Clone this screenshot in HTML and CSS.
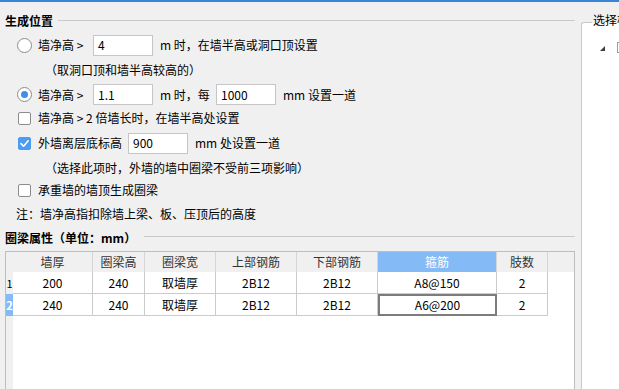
FILE: index.html
```html
<!DOCTYPE html>
<html lang="zh-CN">
<head>
<meta charset="utf-8">
<title>圈梁设置</title>
<link rel="stylesheet" href="styles.css">
</head>
<body>
<div class="topbar"></div>
<div class="page">
  <div class="main">
    <div class="section-title t1"><span>生成位置</span><i class="rule"></i></div>
    <div class="options">
      <div class="row r1">
        <span class="radio"></span>
        <span class="lbl">墙净高 &gt;</span>
        <span class="field">4</span>
        <span class="after">m 时，在墙半高或洞口顶设置</span>
      </div>
      <div class="row r2 note">（取洞口顶和墙半高较高的）</div>
      <div class="row r3">
        <span class="radio on"></span>
        <span class="lbl">墙净高 &gt;</span>
        <span class="field">1.1</span>
        <span class="after each">m 时，每</span>
        <span class="field">1000</span>
        <span class="after">mm 设置一道</span>
      </div>
      <div class="row r4">
        <span class="check"></span>
        <span>墙净高 &gt; 2 倍墙长时，在墙半高处设置</span>
      </div>
      <div class="row r5">
        <span class="check on"><svg viewBox="0 0 13 13" width="13" height="13"><path d="M3 6.6 L5.6 9.2 L10.2 3.8" fill="none" stroke="#fff" stroke-width="1.6" stroke-linecap="round" stroke-linejoin="round"/></svg></span>
        <span class="lbl wide">外墙离层底标高</span>
        <span class="field">900</span>
        <span class="after">mm 处设置一道</span>
      </div>
      <div class="row r6 note">（选择此项时，外墙的墙中圈梁不受前三项影响）</div>
      <div class="row r7">
        <span class="check"></span>
        <span>承重墙的墙顶生成圈梁</span>
      </div>
      <div class="row r8 remark">注：墙净高指扣除墙上梁、板、压顶后的高度</div>
    </div>
    <div class="section-title t2"><span>圈梁属性（单位：mm）</span><i class="rule"></i></div>
    <div class="grid">
      <div class="rh hd"></div>
      <div class="hc">墙厚</div>
      <div class="hc">圈梁高</div>
      <div class="hc">圈梁宽</div>
      <div class="hc">上部钢筋</div>
      <div class="hc">下部钢筋</div>
      <div class="hc sel">箍筋</div>
      <div class="hc">肢数</div>
      <div class="hfill"></div>

      <div class="rh">1</div>
      <div class="c">200</div>
      <div class="c">240</div>
      <div class="c">取墙厚</div>
      <div class="c">2B12</div>
      <div class="c">2B12</div>
      <div class="c">A8@150</div>
      <div class="c">2</div>
      <div class="fill"></div>

      <div class="rh cur">2</div>
      <div class="c">240</div>
      <div class="c">240</div>
      <div class="c">取墙厚</div>
      <div class="c">2B12</div>
      <div class="c">2B12</div>
      <div class="c focus">A6@200</div>
      <div class="c">2</div>
      <div class="fill"></div>

      <div class="rh"></div>
      <div class="empty"></div>
    </div>
  </div>
  <div class="panel">
    <span class="legend">选择构件</span>
    <div class="tree">
      <span class="tri"></span>
      <span class="tbox"></span>
    </div>
  </div>
</div>
</body>
</html>
```
FILE: styles.css
```css
* { box-sizing: border-box; }
html, body { margin: 0; padding: 0; }
body {
  width: 619px;
  height: 389px;
  overflow: hidden;
  background: #f0f0f0;
  font-family: "Noto Sans CJK SC", "Noto Sans", sans-serif;
  font-size: 12px;
  color: #000;
}
.topbar { height: 2px; background: #3a84d6; }
.page { display: flex; height: 387px; }
.main { width: 575px; flex: none; padding-left: 5px; }

.section-title {
  display: flex;
  align-items: center;
  height: 21px;
  font-weight: bold;
  line-height: 16px;
  white-space: nowrap;
}
.t1 { margin-top: 8px; }
.rule { flex: 1; height: 1px; background: #c9c9c9; margin-left: 5px; }
.t2 .rule { margin-left: 8px; margin-top: -2px; }
.t1 .rule { margin-top: -1px; }

.options { margin-top: 1px; }
.row {
  display: flex;
  align-items: center;
  padding-left: 12px;
  line-height: 16px;
  white-space: nowrap;
}
.r1 { height: 26px; }
.r2 { height: 24px; }
.r3 { height: 25px; }
.r4 { height: 22px; }
.r5 { height: 28px; }
.r6 { height: 22px; }
.r7 { height: 22px; }
.r8 { height: 26px; }
.note { padding-left: 40px; }
.remark { padding-left: 11px; }

.radio {
  width: 15px; height: 15px;
  border-radius: 50%;
  border: 1px solid #8c8c8c;
  background: #fff;
  margin-right: 6px;
  display: flex; align-items: center; justify-content: center;
}
.radio.on::after {
  content: "";
  width: 7px; height: 7px;
  border-radius: 50%;
  background: #3f8fe9;
}
.check {
  width: 13px; height: 13px;
  border: 1px solid #8c8c8c;
  border-radius: 2px;
  background: #fff;
  margin-left: 1px;
  margin-right: 7px;
  display: flex;
}
.check.on { background: #4c9cf0; border-color: #4c9cf0; }
.check.on svg { margin: -1px; }

.lbl { width: 55px; }
.lbl.wide { width: 90px; }
.field {
  width: 60px; height: 21px;
  border: 1px solid #c6c6c6;
  background: #fff;
  padding-left: 4px;
  display: flex; align-items: center;
  flex: none;
}
.after { margin-left: 7px; }
.after.each { width: 56px; flex: none; }

.grid {
  margin-top: 3px;
  width: 570px;
  height: 150px;
  border: 1px solid #bdbdbd;
  border-bottom: none;
  background: #fff;
  display: grid;
  grid-template-columns: 7px 80px 52px 71px 81px 81px 119px 51px 1fr;
  grid-template-rows: 20px 22px 22px 1fr;
  line-height: 16px;
}
.rh {
  background: #f0f0f0;
  display: flex; align-items: center; justify-content: center;
  font-size: 11px;
  color: #000;
  overflow: hidden;
}
.rh.cur { background: #84bbf6; color: #fff; font-weight: bold; }
.hc {
  background: #f0f0f0;
  border-right: 1px solid #d6d6d6;
  color: #333;
  display: flex; align-items: center; justify-content: center;
}
.hc.sel { background: #84bbf6; color: #fff; }
.hfill { background: #f0f0f0; }
.c {
  border-right: 1px solid #cbcbcb;
  border-bottom: 1px solid #cbcbcb;
  display: flex; align-items: center; justify-content: center;
}
.c.focus { border: 2px solid #7c7c7c; }
.fill { background: #fff; }
.empty { grid-column: 2 / -1; background: #fff; }

.panel {
  flex: 1;
  margin-left: 6px;
  margin-top: 20px;
  border-left: 1px solid #c9c9c9;
  border-top: 1px solid #c9c9c9;
  border-top-left-radius: 3px;
  background: #fff;
  position: relative;
}
.legend {
  position: absolute;
  top: -11px;
  left: 10px;
  padding: 0 1px;
  line-height: 16px;
  white-space: nowrap;
  background: linear-gradient(#f0f0f0 0, #f0f0f0 11px, #fff 11px);
}
.tree {
  display: flex;
  align-items: center;
  padding: 19px 0 0 18px;
}
.tri {
  width: 0; height: 0;
  border-left: 5px solid transparent;
  border-bottom: 5px solid #3c3c3c;
  margin-top: 2px;
}
.tbox {
  width: 13px; height: 11px;
  border: 1px solid #9a9a9a;
  margin-left: 12px;
  flex: none;
}
```
